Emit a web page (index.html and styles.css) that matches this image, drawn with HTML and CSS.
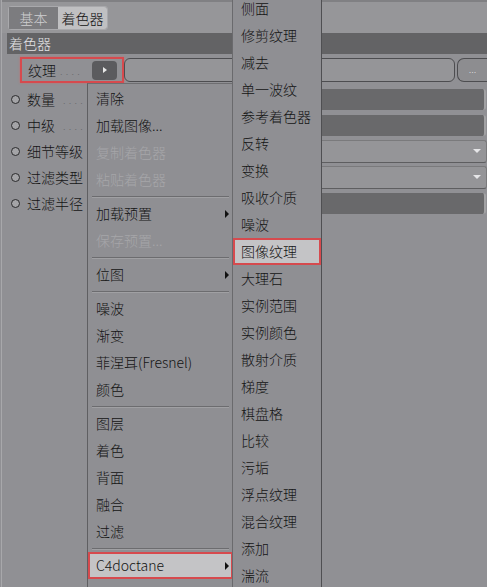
FILE: index.html
```html
<!DOCTYPE html>
<html>
<head>
    <title>着色器</title>
    <link rel="stylesheet" href="styles.css">
</head>
<body>
    <div class="panel">
        <div class="tabs">
            <div class="tab-group">
                <span class="tab">基本</span>
                <span class="tab active">着色器</span>
            </div>
        </div>
        <div class="section-title">着色器</div>

        <div class="row texture-row">
            <div class="texture-label">
                <span class="label">纹理</span>
                <span class="dots">. . . .</span>
                <span class="menu-btn"><span class="tri-right white"></span></span>
            </div>
            <div class="field light"></div>
            <div class="more-btn">...</div>
        </div>

        <div class="row param">
            <div class="param-label"><span class="radio"></span><span class="label">数量</span><span class="dots">. . . .</span></div>
            <div class="field dark"></div>
        </div>
        <div class="row param">
            <div class="param-label"><span class="radio"></span><span class="label">中级</span><span class="dots">. . . .</span></div>
            <div class="field dark"></div>
        </div>
        <div class="row param">
            <div class="param-label"><span class="radio"></span><span class="label">细节等级</span></div>
            <div class="field light select"><span class="tri-down"></span></div>
        </div>
        <div class="row param">
            <div class="param-label"><span class="radio"></span><span class="label">过滤类型</span></div>
            <div class="field light select"><span class="tri-down"></span></div>
        </div>
        <div class="row param">
            <div class="param-label"><span class="radio"></span><span class="label">过滤半径</span></div>
            <div class="field dark"></div>
        </div>
    </div>

    <!-- context menu opened from the texture button -->
    <ul class="menu menu-main">
        <li>清除</li>
        <li>加载图像...</li>
        <li class="disabled">复制着色器</li>
        <li class="disabled">粘贴着色器</li>
        <li class="sep"></li>
        <li class="has-sub">加载预置</li>
        <li class="disabled">保存预置...</li>
        <li class="sep"></li>
        <li class="has-sub">位图</li>
        <li class="sep"></li>
        <li>噪波</li>
        <li>渐变</li>
        <li>菲涅耳(Fresnel)</li>
        <li>颜色</li>
        <li class="sep"></li>
        <li>图层</li>
        <li>着色</li>
        <li>背面</li>
        <li>融合</li>
        <li>过滤</li>
        <li class="sep"></li>
        <li class="has-sub picked">C4doctane</li>
    </ul>

    <ul class="menu menu-sub">
        <li>侧面</li>
        <li>修剪纹理</li>
        <li>减去</li>
        <li>单一波纹</li>
        <li>参考着色器</li>
        <li>反转</li>
        <li>变换</li>
        <li>吸收介质</li>
        <li>噪波</li>
        <li class="picked">图像纹理</li>
        <li>大理石</li>
        <li>实例范围</li>
        <li>实例颜色</li>
        <li>散射介质</li>
        <li>梯度</li>
        <li>棋盘格</li>
        <li>比较</li>
        <li>污垢</li>
        <li>浮点纹理</li>
        <li>混合纹理</li>
        <li>添加</li>
        <li>湍流</li>
    </ul>
</body>
</html>
```

FILE: styles.css
```css
 body {
     margin: 0;
     background-color: #909094;
     font-family: "Noto Sans CJK SC", "Noto Sans", sans-serif;
     font-size: 14px;
     font-weight: 300;
     color: #141414;
     overflow: hidden;
     height: 587px;
     position: relative;
 }

 .panel {
     border-left: 1px solid #a8a8ab;
     margin-left: 1px;
     height: 587px;
 }

 .tabs {
     height: 33px;
     box-sizing: border-box;
     padding: 4px 0 0 6px;
     border-top: 2px solid #808083;
     background-color: #969699;
 }

 .tab-group {
     display: inline-flex;
     border: 1px solid #a9a9ac;
     border-radius: 3px;
     height: 22px;
 }

 .tab {
     width: 49px;
     text-align: center;
     line-height: 22px;
 }

 .tab:first-child {
     background-color: #7c7c7f;
     color: #cfcfd1;
 }

 .tab.active {
     background-color: #c0c0c2;
     color: #111;
     border-radius: 0 3px 3px 0;
 }

 .section-title {
     margin-left: 5px;
     height: 21px;
     line-height: 21px;
     padding-left: 2px;
     background-color: #636365;
     color: #e4e4e6;
 }

 .row {
     display: flex;
     align-items: center;
 }

 .texture-row {
     height: 32px;
 }

 .texture-label {
     display: flex;
     align-items: center;
     margin-left: 18px;
     width: 94px;
     height: 22px;
     padding-left: 6px;
     border: 2px solid #d64a4e;
     box-shadow: 0 0 2px rgba(230, 90, 90, 0.6);
 }

 .dots {
     color: #6a6a6d;
     font-size: 10px;
     margin-left: 4px;
     letter-spacing: 0.5px;
 }

 .menu-btn {
     margin-left: auto;
     margin-right: 5px;
     width: 25px;
     height: 19px;
     border-radius: 4px;
     background-color: #5b5b5e;
     display: flex;
     align-items: center;
     justify-content: center;
 }

 .tri-right {
     width: 0;
     height: 0;
     border-top: 3px solid transparent;
     border-bottom: 3px solid transparent;
     border-left: 4px solid #111;
 }

 .tri-right.white {
     border-left-color: #e8e8e8;
 }

 .tri-down {
     width: 0;
     height: 0;
     border-left: 4px solid transparent;
     border-right: 4px solid transparent;
     border-top: 4px solid #e6e6e8;
     margin-left: auto;
     margin-right: 5px;
 }

 .field {
     flex: 1;
     box-sizing: border-box;
     border-radius: 3px;
 }

 .field.light {
     background-color: #959598;
     border: 1px solid #4d4d50;
     border-radius: 6px;
     height: 24px;
 }

 .field.dark {
     background-color: #69696b;
     height: 21px;
     border-right: 2px solid #a2a2a4;
     margin-right: 1px;
 }

 .field.select {
     display: flex;
     align-items: center;
     height: 23px;
     border-radius: 3px;
     border-color: #7a7a7c;
     border-bottom-color: #5e5e60;
 }

 .more-btn {
     width: 30px;
     height: 24px;
     box-sizing: border-box;
     margin-left: 2px;
     border: 1px solid #4d4d50;
     border-right: none;
     border-radius: 7px 0 0 7px;
     background-color: #8d8d90;
     color: #dcdcde;
     font-size: 10px;
     line-height: 20px;
     text-align: center;
 }

 .param {
     height: 26px;
 }

 .param-label {
     width: 117px;
     display: flex;
     align-items: center;
     padding-left: 9px;
     box-sizing: border-box;
 }

 .radio {
     width: 7px;
     height: 7px;
     border: 1px solid #2a2a2c;
     border-radius: 50%;
     background-color: #a4a4a7;
     margin-right: 7px;
 }

 .param-label .dots {
     margin-left: 8px;
 }

 .menu {
     position: absolute;
     list-style: none;
     margin: 0;
     padding: 0;
     background-color: #8f8f93;
     box-sizing: border-box;
 }

 .menu li {
     height: 27px;
     line-height: 27px;
     padding-left: 8px;
     box-sizing: border-box;
     white-space: nowrap;
     position: relative;
 }

 .menu li.disabled {
     color: #a6a6a9;
 }

 .menu li.sep {
     height: 7px;
     margin: 0 4px;
     padding: 0;
     background: linear-gradient(#8f8f93 3px, #6c6c6f 3px, #6c6c6f 4px, #a0a0a3 4px, #a0a0a3 5px, #8f8f93 5px);
 }

 .menu li.has-sub::after {
     content: "";
     position: absolute;
     right: 4px;
     top: 10px;
     border-top: 4px solid transparent;
     border-bottom: 4px solid transparent;
     border-left: 4px solid #111;
 }

 .menu li.picked {
     background-color: #c4c4c6;
     border: 2px solid #d64a4e;
     line-height: 23px;
     padding-left: 6px;
 }

 .menu li.picked.has-sub::after {
     top: 8px;
     right: 2px;
 }

 .menu-main {
     left: 87px;
     top: 83px;
     width: 146px;
     height: 520px;
     padding-top: 1px;
     border-left: 1px solid #5f5f62;
     border-top: 1px solid #6e6e71;
 }

 .menu-sub {
     left: 232px;
     top: -5px;
     width: 90px;
     height: 600px;
     border-left: 1px solid #6a6a6d;
     border-right: 1px solid #4f4f52;
 }
```
